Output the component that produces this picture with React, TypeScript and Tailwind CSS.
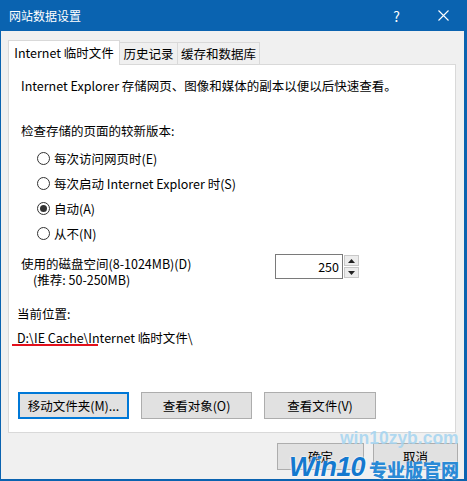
import React from 'react'

const font = { fontFamily: '"Noto Sans CJK SC", "Noto Sans", sans-serif' }

const options = ['每次访问网页时(E)', '每次启动 Internet Explorer 时(S)', '自动(A)', '从不(N)']

function Radio({ label, checked }: { label: string; checked?: boolean }) {
  return (
    <div className="flex h-[25px] items-center pl-[28px]">
      <span className="flex h-[13px] w-[13px] items-center justify-center rounded-full border border-[#333]">
        {checked && <span className="h-[7px] w-[7px] rounded-full bg-[#333]" />}
      </span>
      <span className="ml-[4px]">{label}</span>
    </div>
  )
}

function Btn({ label, width, focused }: { label: string; width: string; focused?: boolean }) {
  return (
    <button
      className={`flex h-[27px] items-center justify-center bg-[#e1e1e1] ${width} ${
        focused ? 'border-2 border-[#0078d7]' : 'border border-[#adadad]'
      }`}
    >
      {label}
    </button>
  )
}

export default function App() {
  return (
    <div
      className="relative flex h-[481px] w-[467px] flex-col overflow-hidden bg-[#0a63b0] text-[12.5px] leading-[16px] text-black"
      style={font}
    >
      {/* title bar */}
      <div className="flex h-[31px] shrink-0 items-center text-white">
        <span className="ml-[9px] text-[12px]">网站数据设置</span>
        <span className="ml-auto mr-[38px] text-[14px]">?</span>
        <svg width="11" height="11" viewBox="0 0 11 11" className="mr-[18px]">
          <path d="M0.5 0.5 L10.5 10.5 M10.5 0.5 L0.5 10.5" stroke="#fff" strokeWidth="1.1" />
        </svg>
      </div>

      {/* body */}
      <div className="mb-[2px] ml-[1px] mr-[3px] flex flex-1 flex-col bg-[#f0f0f0] pl-[7px] pr-[8px] pt-[9px]">
        {/* tabs */}
        <div className="relative z-10 flex h-[24px] items-end">
          <div className="-mb-px flex h-[25px] w-[112px] items-center justify-center border border-b-0 border-[#d9d9d9] bg-white">
            Internet 临时文件
          </div>
          <div className="flex h-[22px] w-[58px] items-center justify-center border border-b-0 border-l-0 border-[#d9d9d9]">
            历史记录
          </div>
          <div className="flex h-[22px] w-[82px] items-center justify-center border border-b-0 border-l-0 border-[#d9d9d9]">
            缓存和数据库
          </div>
        </div>

        {/* panel */}
        <div className="flex h-[369px] flex-col border border-[#d9d9d9] bg-white">
          <div className="mt-[13px] pl-[12px]">Internet Explorer 存储网页、图像和媒体的副本以便以后快速查看。</div>
          <div className="mt-[29px] pl-[12px]">检查存储的页面的较新版本:</div>
          <div className="mt-[7px]">
            {options.map((o, i) => (
              <Radio key={o} label={o} checked={i === 2} />
            ))}
          </div>

          <div className="mt-[8px] flex items-start pl-[12px]">
            <div className="w-[254px] pt-[2px]">
              <div className="h-[16px]">使用的磁盘空间(8-1024MB)(D)</div>
              <div className="h-[16px] pl-[12px]">(推荐: 50-250MB)</div>
            </div>
            <div className="flex h-[25px]">
              <div className="flex w-[68px] items-center justify-end border border-[#7a7a7a] pr-[3px]">250</div>
              <div className="ml-px flex w-[15px] flex-col gap-px py-px">
                <div className="flex flex-1 items-center justify-center border border-[#c8c8c8] bg-[#ececec]">
                  <svg width="7" height="4" viewBox="0 0 7 4">
                    <path d="M0 4 L3.5 0 L7 4 Z" fill="#222" />
                  </svg>
                </div>
                <div className="flex flex-1 items-center justify-center border border-[#c8c8c8] bg-[#ececec]">
                  <svg width="7" height="4" viewBox="0 0 7 4">
                    <path d="M0 0 L3.5 4 L7 0 Z" fill="#222" />
                  </svg>
                </div>
              </div>
            </div>
          </div>

          <div className="mt-[18px] pl-[8px]">当前位置:</div>
          <div className="relative mt-[8px] pl-[8px]">
            D:\IE Cache\Internet 临时文件\
            <span className="absolute left-[3px] top-[14px] h-[2px] w-[86px] bg-[#e3101c]" />
          </div>

          <div className="mt-[46px] flex gap-[12px] pl-[9px]">
            <Btn label="移动文件夹(M)..." width="w-[111px]" focused />
            <Btn label="查看对象(O)" width="w-[111px]" />
            <Btn label="查看文件(V)" width="w-[112px]" />
          </div>
        </div>

        {/* bottom buttons */}
        <div className="-mr-[2px] mt-[10px] flex justify-end gap-[9px]">
          <button className="h-[27px] w-[87px] border border-[#adadad] bg-[#e1e1e1]">确定</button>
          <button className="h-[27px] w-[85px] border border-[#adadad] bg-[#e1e1e1]">取消</button>
        </div>
      </div>

      {/* watermark */}
      <div
        className="pointer-events-none absolute left-[340px] top-[429px] whitespace-nowrap text-[17.5px] font-bold leading-[18px] text-[#a4d4f0]/85"
        style={{ fontFamily: '"Liberation Sans", sans-serif' }}
      >
        win10zyb.com
      </div>
      <div className="pointer-events-none absolute left-[289px] top-[453px] flex items-end whitespace-nowrap">
        <span
          className="text-[27px] font-bold italic leading-[28px] tracking-tight text-[#1479cf]"
          style={{ fontFamily: '"Liberation Sans", sans-serif', textShadow: '0 0 2px #fff, 0 0 2px #fff' }}
        >
          Win10
        </span>
        <span
          className="ml-[4px] text-[18px] font-black leading-[24px] text-[#2a8ad6]"
          style={{ textShadow: '0 0 2px #fff' }}
        >
          专业版官网
        </span>
      </div>
    </div>
  )
}
